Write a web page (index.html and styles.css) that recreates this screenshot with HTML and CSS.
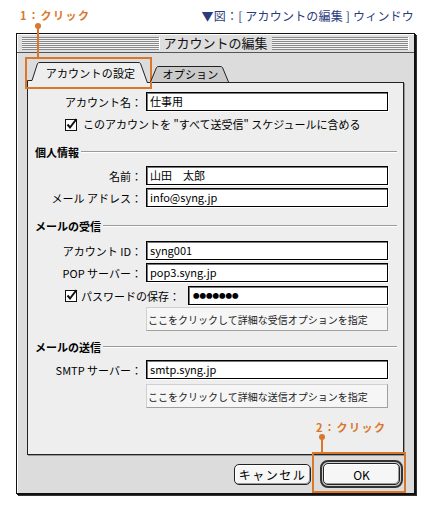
FILE: index.html
```html
<!DOCTYPE html>
<html lang="ja">
<head>
    <meta charset="UTF-8">
    <meta name="viewport" content="width=device-width, initial-scale=1.0">
    <title>アカウントの編集</title>
    <link rel="stylesheet" href="styles.css">
</head>
<body>
<div class="page">
    <div class="head">
        <span class="note">1：クリック</span>
        <span class="caption">▼図：[ アカウントの編集 ] ウィンドウ</span>
    </div>

    <div class="window">
        <div class="titlebar">
            <span class="stripes"></span>
            <span class="title">アカウントの編集</span>
            <span class="stripes"></span>
        </div>

        <div class="body">
            <div class="tabs">
                <div class="tab active">
                    <svg width="121" height="21" viewBox="0 0 121 21"><path d="M0.5 21 L0.5 18.5 L5 18.5 L10.5 1.5 Q11 0.5 13 0.5 L111 0.5 Q113 0.5 113.5 1.5 L120.5 21" fill="#eeeeee" stroke="#222" stroke-width="1"/></svg>
                    <span>アカウントの設定</span>
                </div>
                <div class="tab">
                    <svg width="79" height="16" viewBox="0 0 79 16"><path d="M0.5 16 L6.5 1.5 Q7 0.5 9 0.5 L70 0.5 Q72 0.5 72.5 1.5 L78.5 16" fill="#c9c9c9" stroke="#222" stroke-width="1"/></svg>
                    <span>オプション</span>
                </div>
            </div>

            <div class="panel">
                <div class="row">
                    <label>アカウント名：</label>
                    <div class="field">仕事用</div>
                </div>
                <div class="check-row">
                    <svg class="checkbox" width="13" height="13" viewBox="0 0 13 13"><rect x="0.5" y="1.5" width="11" height="11" fill="#fff" stroke="#111"/><path d="M2.5 6.5 L5 9.5 L11.5 1" fill="none" stroke="#111" stroke-width="2"/></svg>
                    <span>このアカウントを "すべて送受信" スケジュールに含める</span>
                </div>

                <div class="section s1"><span>個人情報</span></div>
                <div class="row gap-s1">
                    <label>名前：</label>
                    <div class="field">山田　太郎</div>
                </div>
                <div class="row next">
                    <label>メール アドレス：</label>
                    <div class="field">info@syng.jp</div>
                </div>

                <div class="section s2"><span>メールの受信</span></div>
                <div class="row gap-s2">
                    <label>アカウント ID：</label>
                    <div class="field">syng001</div>
                </div>
                <div class="row next">
                    <label>POP サーバー：</label>
                    <div class="field">pop3.syng.jp</div>
                </div>
                <div class="check-row pw">
                    <svg class="checkbox" width="13" height="13" viewBox="0 0 13 13"><rect x="0.5" y="1.5" width="11" height="11" fill="#fff" stroke="#111"/><path d="M2.5 6.5 L5 9.5 L11.5 1" fill="none" stroke="#111" stroke-width="2"/></svg>
                    <span>パスワードの保存：</span>
                    <div class="field dots">●●●●●●●</div>
                </div>
                <button class="opt first">ここをクリックして詳細な受信オプションを指定</button>

                <div class="section s3"><span>メールの送信</span></div>
                <div class="row gap-s3">
                    <label>SMTP サーバー：</label>
                    <div class="field">smtp.syng.jp</div>
                </div>
                <button class="opt second">ここをクリックして詳細な送信オプションを指定</button>
            </div>

            <div class="actions">
                <button class="btn">キャンセル</button>
                <span class="default"><button class="btn">OK</button></span>
            </div>
        </div>
    </div>

    <!-- callouts -->
    <div class="mark box1"></div>
    <div class="stem stem1"></div>
    <div class="dot dot1"></div>

    <span class="note note2">2：クリック</span>
    <div class="dot dot2"></div>
    <div class="stem stem2"></div>
    <div class="mark box2"></div>
</div>
</body>
</html>
```

FILE: styles.css
```css
body {
    margin: 0;
    padding: 0;
    background: #fff;
    font-family: "Noto Sans CJK JP", "Noto Sans", sans-serif;
    color: #000;
    font-size: 11px;
}
.page {
    position: relative;
    width: 430px;
    height: 509px;
    overflow: hidden;
}

/* header line */
.head {
    height: 30px;
    display: flex;
    align-items: center;
    justify-content: space-between;
    padding: 0 16px 0 20px;
}
.note {
    color: #d9782a;
    font-weight: bold;
    font-size: 11px;
    letter-spacing: 1.5px;
}
.caption {
    color: #2b3c7e;
    font-size: 12px;
    letter-spacing: 0.2px;
}

/* window */
.window {
    margin: 3px 0 0 16px;
    width: 399px;
    height: 461px;
    box-sizing: border-box;
    border: 1px solid #111;
    box-shadow: 1px 1px 0 #111, 2px 2px 0 #333;
    background: #dcdcdc;
}
.titlebar {
    height: 19px;
    box-sizing: border-box;
    border-bottom: 1px solid #555;
    display: flex;
    align-items: center;
    padding: 0 5px;
    background: #dedede;
    box-shadow: inset 1px 1px 0 #fff;
}
.stripes {
    flex: 1;
    height: 13px;
    background: repeating-linear-gradient(#8a8a8a 0 1px, #f2f2f2 1px 2px);
    border-right: 1px solid #fff;
}
.title {
    padding: 0 4px;
    font-size: 13px;
    line-height: 18px;
    color: #111;
}

.body {
    height: 440px;
    box-sizing: border-box;
    padding: 9px 10px 0 10px;
    box-shadow: inset 1px 0 0 #fff;
}

/* tabs */
.tabs {
    display: flex;
    align-items: flex-end;
    height: 21px;
    margin-bottom: -1px;
    position: relative;
    z-index: 1;
}
.tab {
    position: relative;
    height: 16px;
    width: 79px;
    margin-left: 2px;
    margin-bottom: 1px;
}
.tab.active {
    height: 21px;
    width: 121px;
    margin: 0;
}
.tab svg {
    position: absolute;
    left: 0;
    top: 0;
}
.tab span {
    position: relative;
    display: block;
    text-align: center;
    font-size: 11px;
    line-height: 16px;
    padding-left: 2px;
    letter-spacing: 0.2px;
}
.tab.active span {
    line-height: 20px;
    padding-left: 6px;
    padding-top: 1px;
}

/* panel */
.panel {
    height: 373px;
    box-sizing: border-box;
    background: #eeeeee;
    border: 1px solid #222;
    box-shadow: 1px 1px 0 #999;
    padding: 9px 15px 0 0;
}
.row {
    display: grid;
    grid-template-columns: 114px 242px;
    column-gap: 4px;
    height: 19px;
    align-items: center;
}
.row label {
    text-align: right;
    white-space: nowrap;
}
.row.next { margin-top: 3px; }
.field {
    height: 19px;
    box-sizing: border-box;
    background: #fff;
    border: 1px solid #000;
    box-shadow: inset 1px 1px 0 #777, 1px 1px 0 #fff;
    padding: 0 3px;
    line-height: 17px;
    font-size: 11px;
    white-space: nowrap;
}
.check-row {
    display: flex;
    align-items: center;
    gap: 5px;
    height: 14px;
    margin-top: 6px;
    padding-left: 37px;
}
.check-row.pw {
    height: 19px;
    margin-top: 4px;
    gap: 0;
}
.check-row.pw span {
    margin-left: 3px;
}
.check-row.pw .field {
    margin-left: auto;
    width: 200px;
}
.checkbox {
    flex: none;
}
.dots {
    font-size: 6.5px;
    letter-spacing: 0;
    padding-left: 4px;
}

.section {
    display: flex;
    align-items: center;
    height: 14px;
    margin-right: -9px;
    padding-left: 7px;
    font-weight: bold;
}
.section::after {
    content: "";
    flex: 1;
    border-top: 1px solid #9a9a9a;
    box-shadow: 0 1px 0 #fff;
    margin: -1px 0 0 2px;
}
.s1 { margin-top: 14px; }
.gap-s1 { margin-top: 7px; }
.s2 { margin-top: 12px; }
.gap-s2 { margin-top: 8px; }
.s3 { margin-top: 9px; }
.gap-s3 { margin-top: 6px; }

.opt {
    display: block;
    margin-left: 118px;
    width: 242px;
    height: 24px;
    box-sizing: border-box;
    background: #f6f6f6;
    border: 1px solid #d0d0d0;
    border-right-color: #a0a0a0;
    border-bottom-color: #a0a0a0;
    font-family: inherit;
    font-size: 10px;
    color: #222;
    text-align: left;
    padding: 0 0 0 1px;
}
.opt.first { margin-top: 2px; }
.opt.second { margin-top: 5px; }

/* buttons */
.actions {
    height: 38px;
    display: flex;
    align-items: center;
    justify-content: flex-end;
    gap: 9px;
    padding-right: 1px;
}
.btn {
    height: 21px;
    width: 77px;
    box-sizing: border-box;
    border: 1px solid #222;
    border-radius: 5px;
    background: #f6f6f6;
    box-shadow: inset -1px -1px 0 #999, inset 1px 1px 0 #fff;
    font-family: inherit;
    font-size: 12px;
    letter-spacing: 1.5px;
    padding: 0;
    color: #000;
}
.default {
    display: flex;
    padding: 1px;
    border: 2px solid #333;
    border-radius: 8px;
    background: #cfcfcf;
}
.default .btn {
    width: 77px;
    height: 22px;
    letter-spacing: 0;
    font-size: 12px;
}

/* callouts */
.mark {
    position: absolute;
    box-sizing: border-box;
    border: 2px solid #d9782a;
}
.box1 { left: 25px; top: 57px; width: 127px; height: 32px; }
.box2 { left: 312px; top: 452px; width: 94px; height: 41px; }
.stem {
    position: absolute;
    width: 2px;
    background: #d9782a;
}
.stem1 { left: 37px; top: 26px; height: 31px; }
.stem2 { left: 321px; top: 437px; height: 15px; }
.dot {
    position: absolute;
    width: 6px;
    height: 6px;
    border-radius: 50%;
    background: #d9782a;
}
.dot1 { left: 35px; top: 23px; }
.dot2 { left: 319px; top: 434px; }
.note2 {
    position: absolute;
    left: 316px;
    top: 419px;
}
```
